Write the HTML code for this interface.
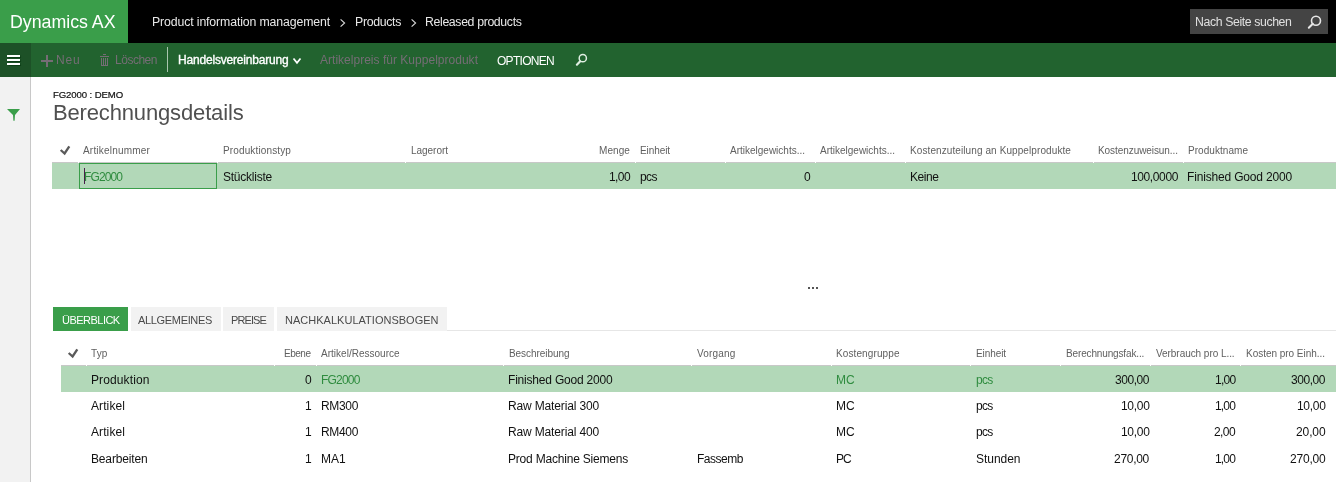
<!DOCTYPE html>
<html><head><meta charset="utf-8"><style>
html,body{margin:0;padding:0;width:1336px;height:482px;overflow:hidden;background:#fff;position:relative;font-family:"Liberation Sans",sans-serif;}
.t{position:absolute;white-space:nowrap;-webkit-font-smoothing:antialiased;will-change:transform;}
.b{position:absolute;}
</style></head><body>
<div class="b" style="left:0;top:0;width:1336px;height:43px;background:#000"></div>
<div class="b" style="left:0;top:0;width:128px;height:43px;background:#3a9e4a"></div>
<div class="b" style="left:1190px;top:9px;width:138px;height:25px;background:#444"></div>
<svg class="b" style="left:1300px;top:10px" width="30" height="24" viewBox="0 0 30 24"><circle cx="16" cy="10.7" r="4.5" fill="none" stroke="#e6e6e6" stroke-width="1.6"/><line x1="8.8" y1="17.8" x2="12.8" y2="13.8" stroke="#e6e6e6" stroke-width="2" stroke-linecap="round"/></svg>
<div class="b" style="left:0;top:43px;width:1336px;height:34px;background:#22632f"></div>
<div class="b" style="left:0;top:43px;width:31px;height:34px;background:#1d5127"></div>
<div class="b" style="left:7px;top:55px;width:13px;height:2px;background:#fff;box-shadow:0 0 1px 0.5px #0c3d16"></div>
<div class="b" style="left:7px;top:59px;width:13px;height:2px;background:#fff;box-shadow:0 0 1px 0.5px #0c3d16"></div>
<div class="b" style="left:7px;top:63px;width:13px;height:2px;background:#fff;box-shadow:0 0 1px 0.5px #0c3d16"></div>
<div class="b" style="left:41px;top:60px;width:12px;height:2px;background:#756d75"></div>
<div class="b" style="left:46px;top:55px;width:2px;height:12px;background:#756d75"></div>
<svg class="b" style="left:95px;top:48px" width="30" height="24" viewBox="0 0 30 24"><g fill="#756d75"><rect x="8" y="6" width="3" height="1"/><rect x="5" y="8" width="9" height="1"/><rect x="6" y="10" width="1" height="8"/><rect x="12" y="10" width="1" height="8"/><rect x="8" y="10" width="1" height="8"/><rect x="10" y="10" width="1" height="8"/><rect x="6" y="17" width="7" height="1"/></g></svg>
<div class="b" style="left:167px;top:47px;width:1px;height:25px;background:#a9c6ae"></div>
<svg class="b" style="left:285px;top:48px" width="25" height="24" viewBox="0 0 25 24"><polyline points="8.5,10.5 12,14.9 15.5,10.5" fill="none" stroke="#fff" stroke-width="1.7"/></svg>
<svg class="b" style="left:568px;top:48px" width="28" height="24" viewBox="0 0 28 24"><circle cx="14.8" cy="10.2" r="3.6" fill="none" stroke="#e0eee2" stroke-width="1.5"/><line x1="8.9" y1="16.7" x2="12.2" y2="13.3" stroke="#e0eee2" stroke-width="2.2" stroke-linecap="round"/></svg>
<div class="b" style="left:0;top:77px;width:30px;height:405px;background:#f2f2f2"></div>
<div class="b" style="left:30px;top:77px;width:1px;height:405px;background:#c8c8c8"></div>
<svg class="b" style="left:0;top:95px" width="30" height="40" viewBox="0 0 30 40"><path d="M7,14 L20,14 L15,20 L14.6,25.8 L13.4,25.8 L13,20 Z" fill="#3a9e4a"/></svg>
<svg class="b" style="left:55px;top:140px" width="25" height="20" viewBox="0 0 25 20"><polyline points="5.7,10.0 9.6,13.5 14.3,6.3" fill="none" stroke="#5a5a5a" stroke-width="2.3"/></svg>
<div class="b" style="left:52px;top:162px;width:1284px;height:1px;background:#c8c8c8"></div>
<div class="b" style="left:52px;top:163px;width:1284px;height:26px;background:#b2d8b8"></div>
<div class="b" style="left:79px;top:163px;width:136px;height:24px;border:1px solid #3a9e4a"></div>
<div class="b" style="left:84px;top:168px;width:1px;height:16px;background:#4a1f4c"></div>
<div class="b" style="left:808px;top:287px;width:2px;height:2px;background:#555"></div>
<div class="b" style="left:812px;top:287px;width:2px;height:2px;background:#555"></div>
<div class="b" style="left:816px;top:287px;width:2px;height:2px;background:#555"></div>
<div class="b" style="left:53px;top:307px;width:75px;height:24px;background:#3a9e4a"></div>
<div class="b" style="left:131px;top:307px;width:90px;height:24px;background:#f2f2f2"></div>
<div class="b" style="left:223px;top:307px;width:51px;height:24px;background:#f2f2f2"></div>
<div class="b" style="left:277px;top:307px;width:170px;height:24px;background:#f2f2f2"></div>
<div class="b" style="left:447px;top:330px;width:889px;height:1px;background:#e6e6e6"></div>
<svg class="b" style="left:63px;top:343px" width="25" height="20" viewBox="0 0 25 20"><polyline points="5.7,10.0 9.6,13.5 14.3,6.3" fill="none" stroke="#5a5a5a" stroke-width="2.3"/></svg>
<div class="b" style="left:61px;top:365px;width:1275px;height:1px;background:#c8c8c8"></div>
<div class="b" style="left:61px;top:366px;width:1275px;height:26px;background:#b2d8b8"></div>
<svg class="b" style="left:338px;top:17px" width="10" height="12" viewBox="0 0 10 12"><polyline points="2.6,2.3 6.6,6 2.6,9.7" fill="none" stroke="#d8d8d8" stroke-width="1.1"/></svg>
<svg class="b" style="left:409px;top:17px" width="10" height="12" viewBox="0 0 10 12"><polyline points="2.6,2.3 6.6,6 2.6,9.7" fill="none" stroke="#d8d8d8" stroke-width="1.1"/></svg>
<div class="b" style="left:78px;top:162px;width:1px;height:1px;background:#fff"></div>
<div class="b" style="left:217px;top:162px;width:1px;height:1px;background:#fff"></div>
<div class="b" style="left:405px;top:162px;width:1px;height:1px;background:#fff"></div>
<div class="b" style="left:635px;top:162px;width:1px;height:1px;background:#fff"></div>
<div class="b" style="left:725px;top:162px;width:1px;height:1px;background:#fff"></div>
<div class="b" style="left:815px;top:162px;width:1px;height:1px;background:#fff"></div>
<div class="b" style="left:905px;top:162px;width:1px;height:1px;background:#fff"></div>
<div class="b" style="left:1093px;top:162px;width:1px;height:1px;background:#fff"></div>
<div class="b" style="left:1183px;top:162px;width:1px;height:1px;background:#fff"></div>
<div class="b" style="left:86px;top:365px;width:1px;height:1px;background:#fff"></div>
<div class="b" style="left:274px;top:365px;width:1px;height:1px;background:#fff"></div>
<div class="b" style="left:316px;top:365px;width:1px;height:1px;background:#fff"></div>
<div class="b" style="left:503px;top:365px;width:1px;height:1px;background:#fff"></div>
<div class="b" style="left:691px;top:365px;width:1px;height:1px;background:#fff"></div>
<div class="b" style="left:831px;top:365px;width:1px;height:1px;background:#fff"></div>
<div class="b" style="left:970px;top:365px;width:1px;height:1px;background:#fff"></div>
<div class="b" style="left:1060px;top:365px;width:1px;height:1px;background:#fff"></div>
<div class="b" style="left:1150px;top:365px;width:1px;height:1px;background:#fff"></div>
<div class="b" style="left:1240px;top:365px;width:1px;height:1px;background:#fff"></div>

<span class='t' style='left:9.80px;top:14.23px;font-size:17.8px;line-height:17.8px;color:#fff;letter-spacing:-0.021px;font-weight:400;'>Dynamics AX</span><span class='t' style='left:152.00px;top:15.59px;font-size:12.3px;line-height:12.3px;color:#e8e8e8;letter-spacing:-0.128px;font-weight:400;'>Product information management</span><span class='t' style='left:355.00px;top:15.59px;font-size:12.3px;line-height:12.3px;color:#e8e8e8;letter-spacing:-0.316px;font-weight:400;'>Products</span><span class='t' style='left:425.30px;top:15.59px;font-size:12.3px;line-height:12.3px;color:#e8e8e8;letter-spacing:-0.356px;font-weight:400;'>Released products</span><span class='t' style='left:1195.00px;top:15.59px;font-size:12.3px;line-height:12.3px;color:#e0e0e0;letter-spacing:-0.396px;font-weight:400;'>Nach Seite suchen</span><span class='t' style='left:56.30px;top:54.34px;font-size:12px;line-height:12px;color:#756d75;letter-spacing:0.828px;font-weight:400;'>Neu</span><span class='t' style='left:115.00px;top:54.34px;font-size:12px;line-height:12px;color:#756d75;letter-spacing:-0.482px;font-weight:400;'>Löschen</span><span class='t' style='left:177.50px;top:54.34px;font-size:12px;line-height:12px;color:#fff;letter-spacing:-0.188px;font-weight:400;-webkit-text-stroke:0.35px #fff;'>Handelsvereinbarung</span><span class='t' style='left:320.00px;top:54.34px;font-size:12px;line-height:12px;color:#756d75;letter-spacing:0.019px;font-weight:400;'>Artikelpreis für Kuppelprodukt</span><span class='t' style='left:497.00px;top:54.84px;font-size:12px;line-height:12px;color:#fff;letter-spacing:-0.709px;font-weight:400;'>OPTIONEN</span><span class='t' style='left:52.50px;top:89.67px;font-size:9.6px;line-height:9.6px;color:#111;letter-spacing:-0.112px;font-weight:400;-webkit-text-stroke:0.2px #111;'>FG2000 : DEMO</span><span class='t' style='left:53.00px;top:101.78px;font-size:22px;line-height:22px;color:#505050;letter-spacing:-0.153px;font-weight:400;'>Berechnungsdetails</span><span class='t' style='left:83.00px;top:145.53px;font-size:10px;line-height:10px;color:#606060;letter-spacing:0.195px;font-weight:400;'>Artikelnummer</span><span class='t' style='left:222.50px;top:145.53px;font-size:10px;line-height:10px;color:#606060;letter-spacing:0.132px;font-weight:400;'>Produktionstyp</span><span class='t' style='left:410.50px;top:145.53px;font-size:10px;line-height:10px;color:#606060;letter-spacing:-0.031px;font-weight:400;'>Lagerort</span><span class='t' style='left:599.00px;top:145.53px;font-size:10px;line-height:10px;color:#606060;letter-spacing:0.084px;font-weight:400;'>Menge</span><span class='t' style='left:640.00px;top:145.53px;font-size:10px;line-height:10px;color:#606060;letter-spacing:-0.083px;font-weight:400;'>Einheit</span><span class='t' style='left:730.00px;top:145.53px;font-size:10px;line-height:10px;color:#606060;letter-spacing:-0.002px;font-weight:400;'>Artikelgewichts...</span><span class='t' style='left:820.00px;top:145.53px;font-size:10px;line-height:10px;color:#606060;letter-spacing:-0.002px;font-weight:400;'>Artikelgewichts...</span><span class='t' style='left:910.00px;top:145.53px;font-size:10px;line-height:10px;color:#606060;letter-spacing:0.094px;font-weight:400;'>Kostenzuteilung an Kuppelprodukte</span><span class='t' style='left:1097.50px;top:145.53px;font-size:10px;line-height:10px;color:#606060;letter-spacing:-0.069px;font-weight:400;'>Kostenzuweisun...</span><span class='t' style='left:1188.00px;top:145.53px;font-size:10px;line-height:10px;color:#606060;letter-spacing:0.047px;font-weight:400;'>Produktname</span><span class='t' style='left:84.00px;top:170.84px;font-size:12px;line-height:12px;color:#2f8c3f;letter-spacing:-0.893px;font-weight:400;'>FG2000</span><span class='t' style='left:222.50px;top:170.84px;font-size:12px;line-height:12px;color:#111111;letter-spacing:-0.236px;font-weight:400;'>Stückliste</span><span class='t' style='left:609.00px;top:170.84px;font-size:12px;line-height:12px;color:#111111;letter-spacing:-0.590px;font-weight:400;'>1,00</span><span class='t' style='left:640.00px;top:170.84px;font-size:12px;line-height:12px;color:#111111;letter-spacing:-0.562px;font-weight:400;'>pcs</span><span class='t' style='left:804.01px;top:170.84px;font-size:12px;line-height:12px;color:#111111;letter-spacing:-0.200px;font-weight:400;'>0</span><span class='t' style='left:910.00px;top:170.84px;font-size:12px;line-height:12px;color:#111111;letter-spacing:-0.441px;font-weight:400;'>Keine</span><span class='t' style='left:1131.00px;top:170.84px;font-size:12px;line-height:12px;color:#111111;letter-spacing:-0.383px;font-weight:400;'>100,0000</span><span class='t' style='left:1187.00px;top:170.84px;font-size:12px;line-height:12px;color:#111111;letter-spacing:-0.171px;font-weight:400;'>Finished Good 2000</span><span class='t' style='left:62.00px;top:314.69px;font-size:11px;line-height:11px;color:#fff;letter-spacing:-0.518px;font-weight:400;'>ÜBERBLICK</span><span class='t' style='left:138.00px;top:314.69px;font-size:11px;line-height:11px;color:#4a4a4a;letter-spacing:-0.331px;font-weight:400;'>ALLGEMEINES</span><span class='t' style='left:230.60px;top:314.69px;font-size:11px;line-height:11px;color:#4a4a4a;letter-spacing:-0.893px;font-weight:400;'>PREISE</span><span class='t' style='left:285.00px;top:314.69px;font-size:11px;line-height:11px;color:#4a4a4a;letter-spacing:0.017px;font-weight:400;'>NACHKALKULATIONSBOGEN</span><span class='t' style='left:91.00px;top:348.54px;font-size:10px;line-height:10px;color:#606060;letter-spacing:0.125px;font-weight:400;'>Typ</span><span class='t' style='left:283.50px;top:348.54px;font-size:10px;line-height:10px;color:#606060;letter-spacing:-0.484px;font-weight:400;'>Ebene</span><span class='t' style='left:321.40px;top:348.54px;font-size:10px;line-height:10px;color:#606060;letter-spacing:0.014px;font-weight:400;'>Artikel/Ressource</span><span class='t' style='left:509.00px;top:348.54px;font-size:10px;line-height:10px;color:#606060;letter-spacing:-0.055px;font-weight:400;'>Beschreibung</span><span class='t' style='left:696.50px;top:348.54px;font-size:10px;line-height:10px;color:#606060;letter-spacing:0.162px;font-weight:400;'>Vorgang</span><span class='t' style='left:836.40px;top:348.54px;font-size:10px;line-height:10px;color:#606060;letter-spacing:0.110px;font-weight:400;'>Kostengruppe</span><span class='t' style='left:975.80px;top:348.54px;font-size:10px;line-height:10px;color:#606060;letter-spacing:-0.083px;font-weight:400;'>Einheit</span><span class='t' style='left:1066.00px;top:348.54px;font-size:10px;line-height:10px;color:#606060;letter-spacing:-0.142px;font-weight:400;'>Berechnungsfak...</span><span class='t' style='left:1156.00px;top:348.54px;font-size:10px;line-height:10px;color:#606060;letter-spacing:-0.050px;font-weight:400;'>Verbrauch pro L...</span><span class='t' style='left:1246.00px;top:348.54px;font-size:10px;line-height:10px;color:#606060;letter-spacing:-0.028px;font-weight:400;'>Kosten pro Einh...</span><span class='t' style='left:91.30px;top:373.84px;font-size:12px;line-height:12px;color:#111111;letter-spacing:0.113px;font-weight:400;'>Produktion</span><span class='t' style='left:304.51px;top:373.84px;font-size:12px;line-height:12px;color:#111111;letter-spacing:-0.200px;font-weight:400;'>0</span><span class='t' style='left:321.00px;top:373.84px;font-size:12px;line-height:12px;color:#2f8c3f;letter-spacing:-0.810px;font-weight:400;'>FG2000</span><span class='t' style='left:507.80px;top:373.84px;font-size:12px;line-height:12px;color:#111111;letter-spacing:-0.199px;font-weight:400;'>Finished Good 2000</span><span class='t' style='left:836.00px;top:373.84px;font-size:12px;line-height:12px;color:#2f8c3f;letter-spacing:-0.086px;font-weight:400;'>MC</span><span class='t' style='left:975.50px;top:373.84px;font-size:12px;line-height:12px;color:#2f8c3f;letter-spacing:-0.729px;font-weight:400;'>pcs</span><span class='t' style='left:1115.40px;top:373.84px;font-size:12px;line-height:12px;color:#111111;letter-spacing:-0.451px;font-weight:400;'>300,00</span><span class='t' style='left:1214.50px;top:373.84px;font-size:12px;line-height:12px;color:#111111;letter-spacing:-0.715px;font-weight:400;'>1,00</span><span class='t' style='left:1291.00px;top:373.84px;font-size:12px;line-height:12px;color:#111111;letter-spacing:-0.451px;font-weight:400;'>300,00</span><span class='t' style='left:91.30px;top:399.84px;font-size:12px;line-height:12px;color:#111111;letter-spacing:0.094px;font-weight:400;'>Artikel</span><span class='t' style='left:304.51px;top:399.84px;font-size:12px;line-height:12px;color:#111111;letter-spacing:-0.200px;font-weight:400;'>1</span><span class='t' style='left:321.00px;top:399.84px;font-size:12px;line-height:12px;color:#111111;letter-spacing:-0.338px;font-weight:400;'>RM300</span><span class='t' style='left:507.80px;top:399.84px;font-size:12px;line-height:12px;color:#111111;letter-spacing:-0.148px;font-weight:400;'>Raw Material 300</span><span class='t' style='left:836.00px;top:399.84px;font-size:12px;line-height:12px;color:#111111;letter-spacing:-0.086px;font-weight:400;'>MC</span><span class='t' style='left:975.50px;top:399.84px;font-size:12px;line-height:12px;color:#111111;letter-spacing:-0.729px;font-weight:400;'>pcs</span><span class='t' style='left:1120.90px;top:399.84px;font-size:12px;line-height:12px;color:#111111;letter-spacing:-0.306px;font-weight:400;'>10,00</span><span class='t' style='left:1215.00px;top:399.84px;font-size:12px;line-height:12px;color:#111111;letter-spacing:-0.840px;font-weight:400;'>1,00</span><span class='t' style='left:1296.50px;top:399.84px;font-size:12px;line-height:12px;color:#111111;letter-spacing:-0.306px;font-weight:400;'>10,00</span><span class='t' style='left:91.30px;top:425.84px;font-size:12px;line-height:12px;color:#111111;letter-spacing:0.094px;font-weight:400;'>Artikel</span><span class='t' style='left:304.51px;top:425.84px;font-size:12px;line-height:12px;color:#111111;letter-spacing:-0.200px;font-weight:400;'>1</span><span class='t' style='left:321.00px;top:425.84px;font-size:12px;line-height:12px;color:#111111;letter-spacing:-0.338px;font-weight:400;'>RM400</span><span class='t' style='left:507.80px;top:425.84px;font-size:12px;line-height:12px;color:#111111;letter-spacing:-0.148px;font-weight:400;'>Raw Material 400</span><span class='t' style='left:836.00px;top:425.84px;font-size:12px;line-height:12px;color:#111111;letter-spacing:-0.086px;font-weight:400;'>MC</span><span class='t' style='left:975.50px;top:425.84px;font-size:12px;line-height:12px;color:#111111;letter-spacing:-0.729px;font-weight:400;'>pcs</span><span class='t' style='left:1120.90px;top:425.84px;font-size:12px;line-height:12px;color:#111111;letter-spacing:-0.306px;font-weight:400;'>10,00</span><span class='t' style='left:1214.00px;top:425.84px;font-size:12px;line-height:12px;color:#111111;letter-spacing:-0.590px;font-weight:400;'>2,00</span><span class='t' style='left:1295.50px;top:425.84px;font-size:12px;line-height:12px;color:#111111;letter-spacing:-0.106px;font-weight:400;'>20,00</span><span class='t' style='left:91.30px;top:452.84px;font-size:12px;line-height:12px;color:#111111;letter-spacing:-0.155px;font-weight:400;'>Bearbeiten</span><span class='t' style='left:304.51px;top:452.84px;font-size:12px;line-height:12px;color:#111111;letter-spacing:-0.200px;font-weight:400;'>1</span><span class='t' style='left:321.00px;top:452.84px;font-size:12px;line-height:12px;color:#111111;letter-spacing:-0.062px;font-weight:400;'>MA1</span><span class='t' style='left:507.80px;top:452.84px;font-size:12px;line-height:12px;color:#111111;letter-spacing:-0.203px;font-weight:400;'>Prod Machine Siemens</span><span class='t' style='left:696.50px;top:452.84px;font-size:12px;line-height:12px;color:#111111;letter-spacing:-0.480px;font-weight:400;'>Fassemb</span><span class='t' style='left:836.00px;top:452.84px;font-size:12px;line-height:12px;color:#111111;letter-spacing:-1.086px;font-weight:400;'>PC</span><span class='t' style='left:975.50px;top:452.84px;font-size:12px;line-height:12px;color:#111111;letter-spacing:-0.031px;font-weight:400;'>Stunden</span><span class='t' style='left:1114.40px;top:452.84px;font-size:12px;line-height:12px;color:#111111;letter-spacing:-0.284px;font-weight:400;'>270,00</span><span class='t' style='left:1215.00px;top:452.84px;font-size:12px;line-height:12px;color:#111111;letter-spacing:-0.840px;font-weight:400;'>1,00</span><span class='t' style='left:1289.50px;top:452.84px;font-size:12px;line-height:12px;color:#111111;letter-spacing:-0.201px;font-weight:400;'>270,00</span>
</body></html>
